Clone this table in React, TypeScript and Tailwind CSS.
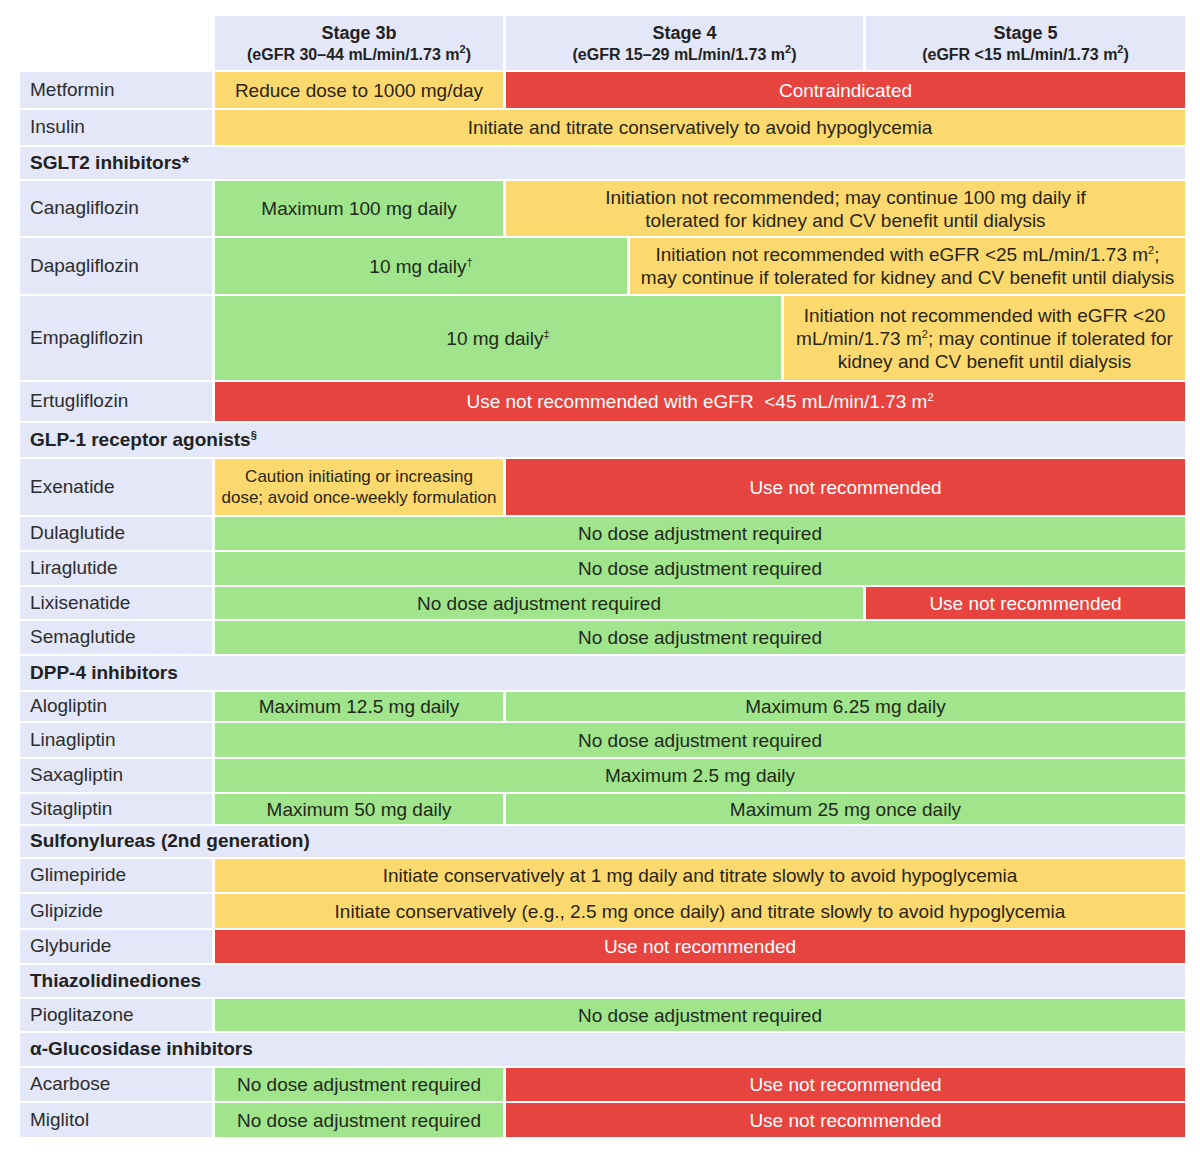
import type { ReactNode } from "react";

// colour per cell kind
const tone = {
  g: "bg-[#a0e48b] text-[#1f2a1b]",
  y: "bg-[#fcd96e] text-[#2a2518]",
  r: "bg-[#e7443f] text-white",
};

type Seg = { w: string; c: "g" | "y" | "r"; t: ReactNode; small?: boolean };

type Row =
  | { kind: "section"; label: ReactNode; h: string }
  | { kind: "drug"; name: string; h: string; segs: Seg[] };

const Sup = ({ children }: { children: ReactNode }) => (
  <sup className="relative top-[-7px] align-baseline text-[11px]">{children}</sup>
);

const rows: Row[] = [
  {
    kind: "drug",
    name: "Metformin",
    h: "h-[36px]",
    segs: [
      { w: "w-[288px]", c: "y", t: "Reduce dose to 1000 mg/day" },
      { w: "flex-1", c: "r", t: "Contraindicated" },
    ],
  },
  {
    kind: "drug",
    name: "Insulin",
    h: "h-[35px]",
    segs: [{ w: "flex-1", c: "y", t: "Initiate and titrate conservatively to avoid hypoglycemia" }],
  },
  { kind: "section", label: "SGLT2 inhibitors*", h: "h-[32px]" },
  {
    kind: "drug",
    name: "Canagliflozin",
    h: "h-[55px]",
    segs: [
      { w: "w-[288px]", c: "g", t: "Maximum 100 mg daily" },
      {
        w: "flex-1",
        c: "y",
        t: (
          <>
            Initiation not recommended; may continue 100 mg daily if
            <br />
            tolerated for kidney and CV benefit until dialysis
          </>
        ),
      },
    ],
  },
  {
    kind: "drug",
    name: "Dapagliflozin",
    h: "h-[56px]",
    segs: [
      {
        w: "w-[412px]",
        c: "g",
        t: (
          <>
            10 mg daily<Sup>†</Sup>
          </>
        ),
      },
      {
        w: "flex-1",
        c: "y",
        t: (
          <>
            Initiation not recommended with eGFR &lt;25 mL/min/1.73 m<Sup>2</Sup>;
            <br />
            may continue if tolerated for kidney and CV benefit until dialysis
          </>
        ),
      },
    ],
  },
  {
    kind: "drug",
    name: "Empagliflozin",
    h: "h-[84px]",
    segs: [
      {
        w: "w-[566px]",
        c: "g",
        t: (
          <>
            10 mg daily<Sup>‡</Sup>
          </>
        ),
      },
      {
        w: "flex-1",
        c: "y",
        t: (
          <>
            Initiation not recommended with eGFR &lt;20
            <br />
            mL/min/1.73 m<Sup>2</Sup>; may continue if tolerated for
            <br />
            kidney and CV benefit until dialysis
          </>
        ),
      },
    ],
  },
  {
    kind: "drug",
    name: "Ertugliflozin",
    h: "h-[39px]",
    segs: [
      {
        w: "flex-1",
        c: "r",
        t: (
          <>
            Use not recommended with eGFR &nbsp;&lt;45 mL/min/1.73 m<Sup>2</Sup>
          </>
        ),
      },
    ],
  },
  {
    kind: "section",
    label: (
      <>
        GLP-1 receptor agonists<Sup>§</Sup>
      </>
    ),
    h: "h-[34px]",
  },
  {
    kind: "drug",
    name: "Exenatide",
    h: "h-[56px]",
    segs: [
      {
        w: "w-[288px]",
        c: "y",
        small: true,
        t: (
          <>
            Caution initiating or increasing
            <br />
            dose; avoid once-weekly formulation
          </>
        ),
      },
      { w: "flex-1", c: "r", t: "Use not recommended" },
    ],
  },
  {
    kind: "drug",
    name: "Dulaglutide",
    h: "h-[33px]",
    segs: [{ w: "flex-1", c: "g", t: "No dose adjustment required" }],
  },
  {
    kind: "drug",
    name: "Liraglutide",
    h: "h-[33px]",
    segs: [{ w: "flex-1", c: "g", t: "No dose adjustment required" }],
  },
  {
    kind: "drug",
    name: "Lixisenatide",
    h: "h-[32px]",
    segs: [
      { w: "flex-1", c: "g", t: "No dose adjustment required" },
      { w: "w-[319px]", c: "r", t: "Use not recommended" },
    ],
  },
  {
    kind: "drug",
    name: "Semaglutide",
    h: "h-[33px]",
    segs: [{ w: "flex-1", c: "g", t: "No dose adjustment required" }],
  },
  { kind: "section", label: "DPP-4 inhibitors", h: "h-[34px]" },
  {
    kind: "drug",
    name: "Alogliptin",
    h: "h-[29px]",
    segs: [
      { w: "w-[288px]", c: "g", t: "Maximum 12.5 mg daily" },
      { w: "flex-1", c: "g", t: "Maximum 6.25 mg daily" },
    ],
  },
  {
    kind: "drug",
    name: "Linagliptin",
    h: "h-[34px]",
    segs: [{ w: "flex-1", c: "g", t: "No dose adjustment required" }],
  },
  {
    kind: "drug",
    name: "Saxagliptin",
    h: "h-[33px]",
    segs: [{ w: "flex-1", c: "g", t: "Maximum 2.5 mg daily" }],
  },
  {
    kind: "drug",
    name: "Sitagliptin",
    h: "h-[30px]",
    segs: [
      { w: "w-[288px]", c: "g", t: "Maximum 50 mg daily" },
      { w: "flex-1", c: "g", t: "Maximum 25 mg once daily" },
    ],
  },
  { kind: "section", label: "Sulfonylureas (2nd generation)", h: "h-[31px]" },
  {
    kind: "drug",
    name: "Glimepiride",
    h: "h-[33px]",
    segs: [
      {
        w: "flex-1",
        c: "y",
        t: "Initiate conservatively at 1 mg daily and titrate slowly to avoid hypoglycemia",
      },
    ],
  },
  {
    kind: "drug",
    name: "Glipizide",
    h: "h-[34px]",
    segs: [
      {
        w: "flex-1",
        c: "y",
        t: "Initiate conservatively (e.g., 2.5 mg once daily) and titrate slowly to avoid hypoglycemia",
      },
    ],
  },
  {
    kind: "drug",
    name: "Glyburide",
    h: "h-[33px]",
    segs: [{ w: "flex-1", c: "r", t: "Use not recommended" }],
  },
  { kind: "section", label: "Thiazolidinediones", h: "h-[32px]" },
  {
    kind: "drug",
    name: "Pioglitazone",
    h: "h-[32px]",
    segs: [{ w: "flex-1", c: "g", t: "No dose adjustment required" }],
  },
  { kind: "section", label: "α-Glucosidase inhibitors", h: "h-[33px]" },
  {
    kind: "drug",
    name: "Acarbose",
    h: "h-[33px]",
    segs: [
      { w: "w-[288px]", c: "g", t: "No dose adjustment required" },
      { w: "flex-1", c: "r", t: "Use not recommended" },
    ],
  },
  {
    kind: "drug",
    name: "Miglitol",
    h: "h-[34px]",
    segs: [
      { w: "w-[288px]", c: "g", t: "No dose adjustment required" },
      { w: "flex-1", c: "r", t: "Use not recommended" },
    ],
  },
];

function StageHead({ title, range, w }: { title: string; range: ReactNode; w: string }) {
  return (
    <div className={`${w} flex flex-col items-center justify-center bg-[#e3e7f8] font-bold text-[#222]`}>
      <div className="text-[18px] leading-[22px]">{title}</div>
      <div className="text-[16px] leading-[21px]">{range}</div>
    </div>
  );
}

export default function App() {
  return (
    <div className="min-h-[1159px] w-[1200px] bg-white pt-[16px] font-['Liberation_Sans',Arial,sans-serif]">
      <div className="ml-[20px] flex w-[1165px] flex-col gap-[2px]">
        {/* header */}
        <div className="flex h-[54px] gap-[3px]">
          <div className="w-[192px]" />
          <StageHead
            w="w-[288px]"
            title="Stage 3b"
            range={
              <>
                (eGFR 30–44 mL/min/1.73 m<Sup>2</Sup>)
              </>
            }
          />
          <StageHead
            w="flex-1"
            title="Stage 4"
            range={
              <>
                (eGFR 15–29 mL/min/1.73 m<Sup>2</Sup>)
              </>
            }
          />
          <StageHead
            w="w-[319px]"
            title="Stage 5"
            range={
              <>
                (eGFR &lt;15 mL/min/1.73 m<Sup>2</Sup>)
              </>
            }
          />
        </div>

        {rows.map((row, i) =>
          row.kind === "section" ? (
            <div
              key={i}
              className={`${row.h} flex items-center bg-[#e3e7f8] pl-[10px] text-[19px] font-bold text-[#222]`}
            >
              <span>{row.label}</span>
            </div>
          ) : (
            <div key={i} className={`${row.h} flex gap-[3px]`}>
              <div className="flex w-[192px] items-center bg-[#e3e7f8] pl-[10px] text-[19px] text-[#2d2d2d]">
                {row.name}
              </div>
              {row.segs.map((s, j) => (
                <div
                  key={j}
                  className={`${s.w} ${tone[s.c]} flex items-center justify-center text-center ${
                    s.small ? "text-[17px] leading-[21px]" : "text-[19px] leading-[23px]"
                  }`}
                >
                  <span>{s.t}</span>
                </div>
              ))}
            </div>
          )
        )}
      </div>
    </div>
  );
}
